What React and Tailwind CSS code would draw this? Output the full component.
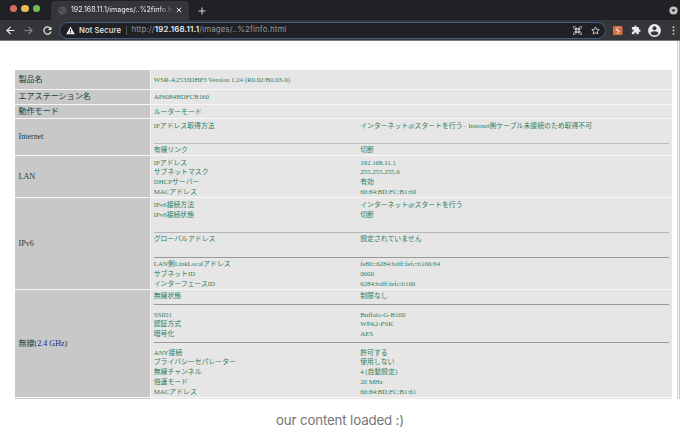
import React from "react";

const SERIF = "font-['Liberation_Serif','Noto_Sans_CJK_JP',serif]";

function Line({ name, value }) {
  return (
    <div className="flex h-[9.75px] items-center whitespace-nowrap leading-[9.75px]">
      <span className="w-[206.5px] shrink-0">{name}</span>
      <span>{value}</span>
    </div>
  );
}

function Rule({ className }) {
  return <div className={`h-px w-[515px] ${className}`} />;
}

function Row({ label, height, children, className = "" }) {
  return (
    <div className={`flex shrink-0 gap-px ${height}`}>
      <div className="flex w-[135px] shrink-0 items-center bg-[#c8c8c8] pl-[3.5px] pt-[1.5px] text-[8.05px] leading-[10px] text-[#1d3d35]">
        {label}
      </div>
      <div className={`flex w-[521px] flex-col bg-[#e6e6e6] pl-[2.7px] text-[6.86px] text-[#2f7d60] ${className}`}>{children}</div>
    </div>
  );
}

function TabStrip() {
  return (
    <div className="flex h-5 bg-[#202124]">
      <div className="flex w-[51px] items-center gap-1 pb-[3px] pl-[9.5px]">
        <span className="size-[7.5px] rounded-full bg-[#de6b62]" />
        <span className="size-[7.5px] rounded-full bg-[#e4b958]" />
        <span className="size-[7.5px] rounded-full bg-[#72bd57]" />
      </div>
      <div className="mt-px flex w-[138px] items-center rounded-t-[4px] bg-[#35363a] pl-[7px]">
        <svg className="size-[9px] shrink-0" viewBox="0 0 18 18">
          <circle cx="9" cy="9" r="8" fill="#5a5b5e" />
          <path d="M3 5l5 1 1 3-3 2-3-3zM10 2l5 3-3 2zM11 9l4 1-3 5-3-1z" fill="#3c3d40" />
        </svg>
        <span className="ml-1 w-[101px] shrink-0 whitespace-nowrap bg-gradient-to-r from-[#e9eaed] from-85% to-[#55565a] bg-clip-text font-[Inter,sans-serif] text-[7px] font-medium tracking-[-0.05px] text-transparent">
          192.168.11.1/images/..%2finfo.h
        </span>
        <svg className="ml-[4px] size-[6px]" viewBox="0 0 6 6" stroke="#e4e5e8" strokeWidth="1">
          <path d="M.8.8l4.4 4.4M5.2.8L.8 5.2" />
        </svg>
      </div>
      <svg className="ml-[8.5px] mt-[7px] size-[8px]" viewBox="0 0 8 8" stroke="#d0d1d4" strokeWidth="1.1">
        <path d="M4 .5v7M.5 4h7" />
      </svg>
      <svg className="ml-auto mr-[2.5px] mt-[6px] size-[9px]" viewBox="0 0 9 9">
        <circle cx="4.5" cy="4.5" r="4.1" fill="#c4c5c8" />
        <path d="M2.4 3.4h4.2L4.5 6.3z" fill="#202124" />
      </svg>
    </div>
  );
}

function Toolbar() {
  return (
    <div className="flex h-[21.5px] items-center border-b border-[#77787b] bg-[#35363a] pt-px">
      <svg className="ml-[6px] size-[9px]" viewBox="0 0 9 9" fill="none" stroke="#e8eaed" strokeWidth="1.2">
        <path d="M8.5 4.5H1M4.6.8L.9 4.5l3.7 3.7" />
      </svg>
      <svg className="ml-[9px] size-[9px]" viewBox="0 0 9 9" fill="none" stroke="#85868a" strokeWidth="1.1">
        <path d="M.5 4.5H8M4.4.8l3.7 3.7-3.7 3.7" />
      </svg>
      <svg className="ml-[9.5px] size-[9px]" viewBox="0 0 9 9" fill="none" stroke="#e8eaed" strokeWidth="1.2">
        <path d="M7.4 2.4A3.6 3.6 0 1 0 8 5.5" />
        <path d="M8.5.4v3.7H4.8z" fill="#e8eaed" stroke="none" />
      </svg>
      <div className="ml-[7.5px] flex h-[17px] w-[547px] items-center rounded-full border border-[#3c608b] bg-[#202124] font-[Inter,sans-serif] text-[7.7px]">
        <svg className="ml-[5.5px] size-[9px]" viewBox="0 0 9 9">
          <path d="M4.5.5L8.8 8.3H.2z" fill="#e8eaed" />
          <path d="M4.5 3v2.6M4.5 6.3v1" stroke="#202124" strokeWidth="1" />
        </svg>
        <span className="ml-[4.5px] w-[43.5px] whitespace-nowrap font-medium tracking-[0.1px] text-[#e8eaed]">Not Secure</span>
        <span className="ml-[3px] h-[9px] w-px bg-[#505155]" />
        <span className="ml-[5px] whitespace-nowrap text-[7.9px] tracking-[0.12px] text-[#96989c]">
          http://<span className="font-semibold tracking-[0.2px] text-[#e8eaed]">192.168.11.1</span>/images/..%2finfo.html
        </span>
        <svg className="ml-auto size-[9px]" viewBox="0 0 18 18" fill="none" stroke="#bfc0c3" strokeWidth="1.5">
          <path d="M1 5V1h4M13 1h4v4M17 13v4h-4M5 17H1v-4" />
          <path d="M4 4h4v4H4zM10 4h4v4h-4zM4 10h4v4H4zM10 10h4v4h-4z" fill="#bfc0c3" />
        </svg>
        <svg className="ml-[9px] mr-[5.5px] size-[9px]" viewBox="0 0 24 24" fill="none" stroke="#dcdde0" strokeWidth="2.4">
          <path d="M12 2.5l2.9 6.4 7 .8-5.2 4.7 1.4 6.9-6.1-3.5-6.1 3.5 1.4-6.9-5.2-4.7 7-.8z" />
        </svg>
      </div>
      <svg className="ml-[7px] h-[9px] w-[10px]" viewBox="0 0 10 9">
        <rect width="9.5" height="9" rx="1" fill="#d57044" />
        <path d="M5.3 1.2L3.3 4l2.6 1-1.6 2.9M3.4 2.5v2M6 4.3v1.8" stroke="#f8e4da" strokeWidth=".9" fill="none" />
      </svg>
      <svg className="ml-[8px] size-[10px]" viewBox="0 0 24 24" fill="#e8eaed">
        <path d="M20.5 11H19V7c0-1.1-.9-2-2-2h-4V3.5a2.5 2.5 0 0 0-5 0V5H4c-1.1 0-2 .9-2 2v3.8h1.5a2.7 2.7 0 0 1 0 5.4H2V20c0 1.1.9 2 2 2h3.8v-1.5a2.7 2.7 0 0 1 5.4 0V22H17c1.1 0 2-.9 2-2v-4h1.5a2.5 2.5 0 0 0 0-5z" />
      </svg>
      <svg className="ml-[7px] size-[13px]" viewBox="0 0 13 13">
        <circle cx="6.5" cy="6.5" r="6.4" fill="#e8eaed" />
        <circle cx="6.5" cy="4.3" r="2" fill="#35363a" />
        <path d="M2.6 9.4c0-3 7.8-3 7.8 0-2 2.5-5.8 2.5-7.8 0z" fill="#35363a" />
      </svg>
      <svg className="ml-[10.5px] h-[9px] w-[3px]" viewBox="0 0 3 9" fill="#dcdde0">
        <circle cx="1.5" cy="1.2" r=".9" />
        <circle cx="1.5" cy="4.5" r=".9" />
        <circle cx="1.5" cy="7.8" r=".9" />
      </svg>
    </div>
  );
}

export default function App() {
  return (
    <div className="flex h-[430px] w-[680px] flex-col overflow-hidden bg-white">
      <TabStrip />
      <Toolbar />
      <div className="flex h-[358px] shrink-0 justify-between overflow-hidden">
        <div className={`ml-[15px] flex w-[657px] flex-col pt-[28.5px] ${SERIF}`}>
          <div className="flex flex-col gap-px bg-[#f6f6f6]">
            <Row label="製品名" height="h-[19px]" className="justify-center pt-[1.5px]">
              <Line name="WSR-A2533DHP3 Version 1.24 (R0.02/B0.03-0)" />
            </Row>
            <Row label="エアステーション名" height="h-[14px]" className="justify-center pt-px">
              <Line name="AP6084BDFCB160" />
            </Row>
            <Row label="動作モード" height="h-[13px]" className="justify-center pt-px">
              <Line name="ルーターモード" />
            </Row>
            <Row label="Internet" height="h-[36px]" className="pt-[2px]">
              <Line name="IPアドレス取得方法" value="インターネット@スタートを行う - Internet側ケーブル未接続のため取得不可" />
              <Rule className="mb-[1.75px] mt-[12.25px] bg-[#bcbcbc]" />
              <Line name="有線リンク" value="切断" />
            </Row>
            <Row label="LAN" height="h-[41px]" className="pt-[2px]">
              <Line name="IPアドレス" value="192.168.11.1" />
              <Line name="サブネットマスク" value="255.255.255.0" />
              <Line name="DHCPサーバー" value="有効" />
              <Line name="MACアドレス" value="60:84:BD:FC:B1:60" />
            </Row>
            <Row label="IPv6" height="h-[91px]" className="pt-[2.25px]">
              <Line name="IPv6接続方法" value="インターネット@スタートを行う" />
              <Line name="IPv6接続状態" value="切断" />
              <Rule className="mb-[1.5px] mt-[12.25px] bg-[#b5b5b5]" />
              <Line name="グローバルアドレス" value="設定されていません" />
              <Rule className="mb-[1.5px] mt-[12.75px] bg-[#999]" />
              <Line name="LAN側LinkLocalアドレス" value="fe80::6284:bdff:fefc:b160/64" />
              <Line name="サブネットID" value="0000" />
              <Line name="インターフェースID" value="6284:bdff:fefc:b160" />
            </Row>
            <Row
              label={<span>無線(<span className="text-[#22228c]">2.4 GHz</span>)</span>}
              height="h-[107px]"
              className="pt-[1.5px]"
            >
              <Line name="無線状態" value="制限なし" />
              <Rule className="mb-[5px] mt-[2.75px] bg-[#999]" />
              <Line name="SSID1" value="Buffalo-G-B160" />
              <Line name="認証方式" value="WPA2-PSK" />
              <Line name="暗号化" value="AES" />
              <Rule className="mb-[5px] mt-[2.75px] bg-[#999]" />
              <Line name="ANY接続" value="許可する" />
              <Line name="プライバシーセパレーター" value="使用しない" />
              <Line name="無線チャンネル" value="4 (自動設定)" />
              <Line name="倍速モード" value="20 MHz" />
              <Line name="MACアドレス" value="60:84:BD:FC:B1:61" />
            </Row>
            <Row height="h-[10px]" />
          </div>
        </div>
        <div className="w-[3px] border-l border-[#dadada] bg-[#f3f3f3]">
          <div className="ml-px h-full w-px bg-[#c9c9c9]" />
        </div>
      </div>
      <p className="pt-[11px] text-center font-[Inter,sans-serif] text-[13.3px] leading-5 tracking-[-0.15px] text-[#757575]">
        our content loaded :)
      </p>
    </div>
  );
}
